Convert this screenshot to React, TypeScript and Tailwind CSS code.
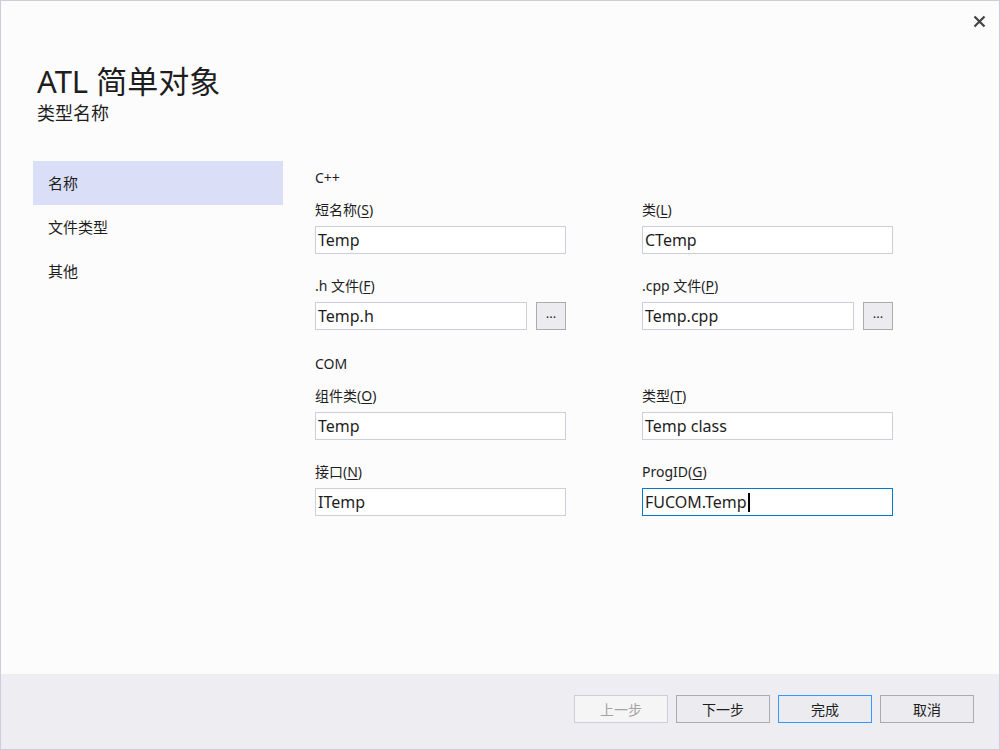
const font = {
  fontFamily: '"Noto Sans", "Noto Sans CJK SC", sans-serif',
};

function Label({ text, hotkey }: { text: string; hotkey: string }) {
  return (
    <div className="h-[20px] text-[14px] leading-[20px] text-[#1e1e1e] mb-[6px]">
      {text}(<span className="underline underline-offset-2">{hotkey}</span>)
    </div>
  );
}

function TextBox({ value, focused }: { value: string; focused?: boolean }) {
  return (
    <div
      className={`flex h-[28px] flex-1 items-center border bg-white px-[2px] text-[16px] text-[#1e1e1e] ${
        focused ? "border-[#007acc]" : "border-[#cccedb]"
      }`}
    >
      <span>{value}</span>
      {focused && <span className="ml-px h-[19px] w-[2px] bg-black" />}
    </div>
  );
}

function Field({
  text,
  hotkey,
  value,
  browse,
  focused,
}: {
  text: string;
  hotkey: string;
  value: string;
  browse?: boolean;
  focused?: boolean;
}) {
  return (
    <div className="flex w-[251px] flex-col">
      <Label text={text} hotkey={hotkey} />
      <div className="flex gap-[9px]">
        <TextBox value={value} focused={focused} />
        {browse && (
          <div className="flex h-[28px] w-[30px] items-center justify-center border border-[#acacac] bg-[#ececf0] pb-1 text-[13px] text-[#1e1e1e]">
            ...
          </div>
        )}
      </div>
    </div>
  );
}

function FooterButton({
  label,
  disabled,
  primary,
}: {
  label: string;
  disabled?: boolean;
  primary?: boolean;
}) {
  let cls = "border-[#acacac] bg-[#ececf0] text-[#1e1e1e]";
  if (disabled) cls = "border-[#cccedb] bg-[#f5f5f5] text-[#a2a4a5]";
  if (primary) cls = "border-[#3399ff] bg-[#ececf0] text-[#1e1e1e]";
  return (
    <button
      className={`flex h-[28px] w-[94px] items-center justify-center border text-[14px] ${cls}`}
    >
      {label}
    </button>
  );
}

const navItems = ["名称", "文件类型", "其他"];

export default function App() {
  return (
    <div
      className="flex h-[750px] w-[1000px] flex-col border border-[#cccedb] bg-[#fcfcfc] text-[#1e1e1e]"
      style={font}
    >
      <div className="flex h-[60px] justify-end pr-[13px] pt-[14px]">
        <svg width="13" height="13" viewBox="0 0 13 13">
          <path
            d="M1.5 1.5 L11.5 11.5 M11.5 1.5 L1.5 11.5"
            stroke="#424242"
            strokeWidth="2.2"
          />
        </svg>
      </div>

      <div className="pl-[36px]">
        <div className="h-[40px] text-[31px] leading-[40px]">ATL 简单对象</div>
        <div className="h-[24px] text-[18px] leading-[24px]">类型名称</div>
      </div>

      <div className="mt-[36px] flex flex-1 gap-[32px] pl-[32px]">
        <div className="flex w-[250px] flex-col">
          {navItems.map((item, i) => (
            <div
              key={item}
              className={`flex h-[44px] items-center pl-[15px] text-[15px] ${
                i === 0 ? "bg-[#dadff7]" : ""
              }`}
            >
              {item}
            </div>
          ))}
        </div>

        <div className="flex flex-col pt-[7px]">
          <div className="mb-[12px] h-[20px] text-[14px] leading-[20px]">C++</div>
          <div className="flex gap-[76px]">
            <Field text="短名称" hotkey="S" value="Temp" />
            <Field text="类" hotkey="L" value="CTemp" />
          </div>
          <div className="mt-[22px] flex gap-[76px]">
            <Field text=".h 文件" hotkey="F" value="Temp.h" browse />
            <Field text=".cpp 文件" hotkey="P" value="Temp.cpp" browse />
          </div>

          <div className="mb-[12px] mt-[24px] h-[20px] text-[14px] leading-[20px]">COM</div>
          <div className="flex gap-[76px]">
            <Field text="组件类" hotkey="O" value="Temp" />
            <Field text="类型" hotkey="T" value="Temp class" />
          </div>
          <div className="mt-[22px] flex gap-[76px]">
            <Field text="接口" hotkey="N" value="ITemp" />
            <Field text="ProgID" hotkey="G" value="FUCOM.Temp" focused />
          </div>
        </div>
      </div>

      <div className="flex h-[75px] justify-end gap-[8px] bg-[#eeeef2] pr-[25px] pt-[21px]">
        <FooterButton label="上一步" disabled />
        <FooterButton label="下一步" />
        <FooterButton label="完成" primary />
        <FooterButton label="取消" />
      </div>
    </div>
  );
}
